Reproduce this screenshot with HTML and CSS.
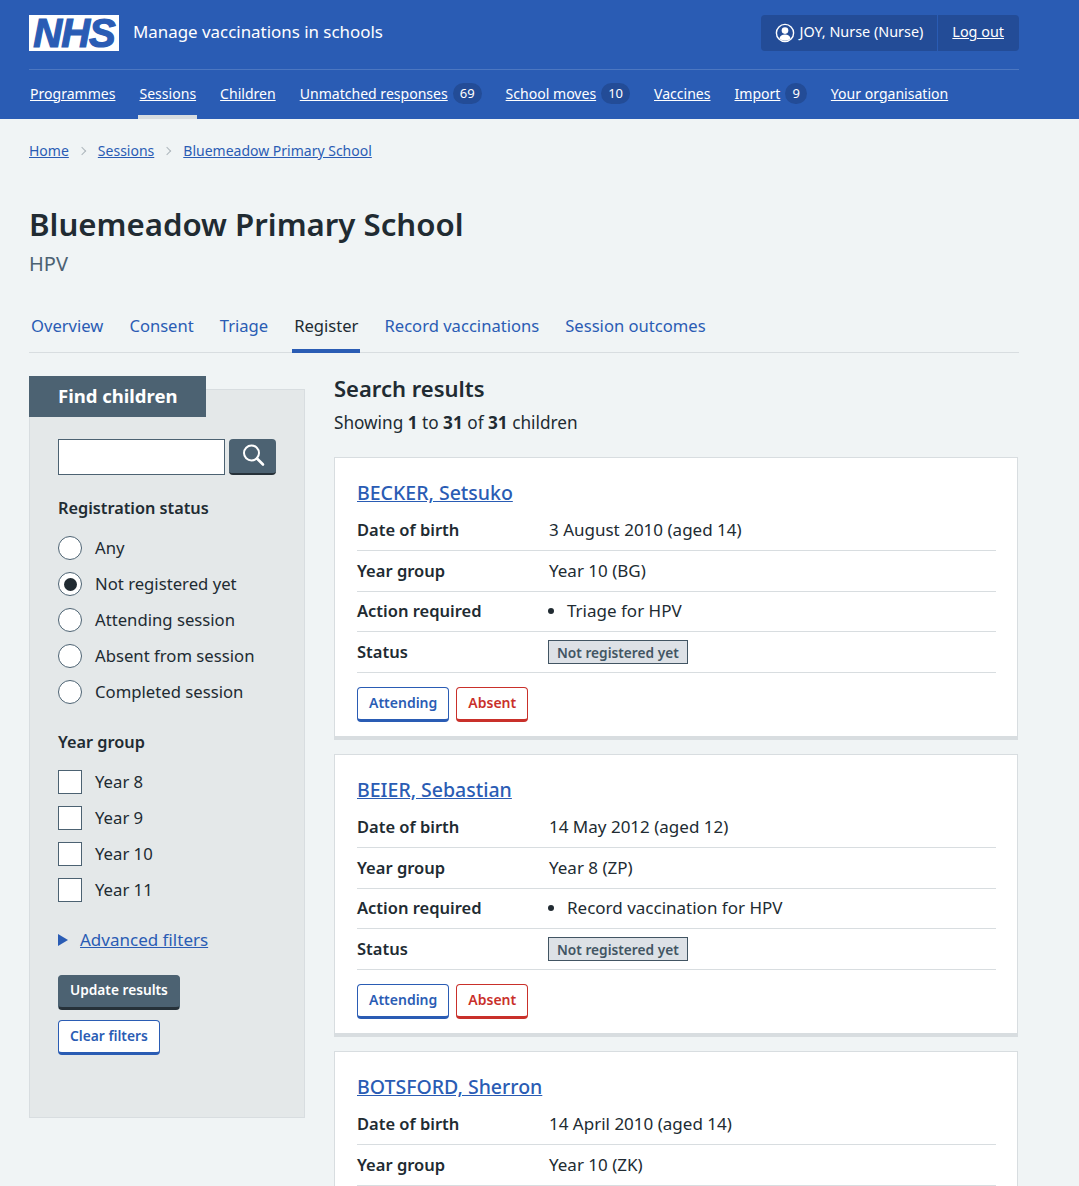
FILE: index.html
```html
<!DOCTYPE html>
<html lang="en">
<head>
    <meta charset="UTF-8">
    <meta name="viewport" content="width=device-width, initial-scale=1.0">
    <title>Bluemeadow Primary School - Register</title>
    <link rel="stylesheet" href="styles.css">
</head>
<body>
    <header class="site-header">
        <div class="header-top">
            <a class="logo" href="#">NHS</a>
            <span class="service-name">Manage vaccinations in schools</span>
            <div class="account">
                <span class="account-user">
                    <svg class="account-icon" viewBox="0 0 20 20" width="20" height="20" aria-hidden="true">
                        <circle cx="10" cy="10" r="8.6" fill="none" stroke="#fff" stroke-width="1.4"/>
                        <circle cx="10" cy="7.6" r="3.3" fill="#fff"/>
                        <path d="M4.4 15.6c.5-2.9 2.7-4 5.6-4s5.100 1.100 5.600 4a8.200 8.200 0 0 1-11.200 0z" fill="#fff"/>
                    </svg>
                    JOY, Nurse (Nurse)
                </span>
                <a class="account-link" href="#">Log out</a>
            </div>
        </div>
        <nav class="header-nav">
            <a class="nav-link" href="#"><u>Programmes</u></a>
            <a class="nav-link nav-link-active" href="#"><u>Sessions</u></a>
            <a class="nav-link" href="#"><u>Children</u></a>
            <a class="nav-link" href="#"><u>Unmatched responses</u><span class="count">69</span></a>
            <a class="nav-link" href="#"><u>School moves</u><span class="count">10</span></a>
            <a class="nav-link" href="#"><u>Vaccines</u></a>
            <a class="nav-link" href="#"><u>Import</u><span class="count">9</span></a>
            <a class="nav-link" href="#"><u>Your organisation</u></a>
        </nav>
    </header>

    <div class="page">
        <nav class="breadcrumb">
            <a href="#">Home</a>
            <span class="crumb-sep"></span>
            <a href="#">Sessions</a>
            <span class="crumb-sep"></span>
            <a href="#">Bluemeadow Primary School</a>
        </nav>

        <h1 class="page-title">Bluemeadow Primary School</h1>
        <p class="page-caption">HPV</p>

        <nav class="tabs">
            <a class="tab" href="#">Overview</a>
            <a class="tab" href="#">Consent</a>
            <a class="tab" href="#">Triage</a>
            <a class="tab tab-active" href="#">Register</a>
            <a class="tab" href="#">Record vaccinations</a>
            <a class="tab" href="#">Session outcomes</a>
        </nav>

        <div class="columns">
            <aside class="filters">
                <h2 class="filters-title">Find children</h2>
                <div class="search-row">
                    <input class="search-input" type="text" aria-label="Search">
                    <button class="search-button" type="button" aria-label="Search">
                        <svg viewBox="0 0 24 24" width="24" height="24" aria-hidden="true">
                            <circle cx="10.500" cy="10" r="7.500" fill="none" stroke="#fff" stroke-width="2"/>
                            <path d="M16 15.500l6 6" stroke="#fff" stroke-width="2.600" stroke-linecap="round"/>
                        </svg>
                    </button>
                </div>

                <h3 class="filter-label">Registration status</h3>
                <div class="option"><span class="radio"></span>Any</div>
                <div class="option"><span class="radio radio-checked"></span>Not registered yet</div>
                <div class="option"><span class="radio"></span>Attending session</div>
                <div class="option"><span class="radio"></span>Absent from session</div>
                <div class="option"><span class="radio"></span>Completed session</div>

                <h3 class="filter-label filter-label-year">Year group</h3>
                <div class="option"><span class="checkbox"></span>Year 8</div>
                <div class="option"><span class="checkbox"></span>Year 9</div>
                <div class="option"><span class="checkbox"></span>Year 10</div>
                <div class="option"><span class="checkbox"></span>Year 11</div>

                <div class="advanced"><span class="advanced-arrow"></span><a href="#">Advanced filters</a></div>

                <div class="filter-actions">
                    <button class="btn btn-dark" type="button">Update results</button>
                    <button class="btn btn-blue btn-clear" type="button">Clear filters</button>
                </div>
            </aside>

            <main class="results">
                <h2 class="results-title">Search results</h2>
                <p class="results-count">Showing <b>1</b> to <b>31</b> of <b>31</b> children</p>

                <section class="card">
                    <h3 class="card-name"><a href="#">BECKER, Setsuko</a></h3>
                    <dl class="summary">
                        <div class="row"><dt>Date of birth</dt><dd>3 August 2010 (aged 14)</dd></div>
                        <div class="row"><dt>Year group</dt><dd>Year 10 (BG)</dd></div>
                        <div class="row"><dt>Action required</dt><dd><ul class="action-list"><li>Triage for HPV</li></ul></dd></div>
                        <div class="row"><dt>Status</dt><dd><span class="tag">Not registered yet</span></dd></div>
                    </dl>
                    <div class="card-actions">
                        <button class="btn btn-blue" type="button">Attending</button>
                        <button class="btn btn-red" type="button">Absent</button>
                    </div>
                </section>

                <section class="card">
                    <h3 class="card-name"><a href="#">BEIER, Sebastian</a></h3>
                    <dl class="summary">
                        <div class="row"><dt>Date of birth</dt><dd>14 May 2012 (aged 12)</dd></div>
                        <div class="row"><dt>Year group</dt><dd>Year 8 (ZP)</dd></div>
                        <div class="row"><dt>Action required</dt><dd><ul class="action-list"><li>Record vaccination for HPV</li></ul></dd></div>
                        <div class="row"><dt>Status</dt><dd><span class="tag">Not registered yet</span></dd></div>
                    </dl>
                    <div class="card-actions">
                        <button class="btn btn-blue" type="button">Attending</button>
                        <button class="btn btn-red" type="button">Absent</button>
                    </div>
                </section>

                <section class="card">
                    <h3 class="card-name"><a href="#">BOTSFORD, Sherron</a></h3>
                    <dl class="summary">
                        <div class="row"><dt>Date of birth</dt><dd>14 April 2010 (aged 14)</dd></div>
                        <div class="row"><dt>Year group</dt><dd>Year 10 (ZK)</dd></div>
                    </dl>
                </section>
            </main>
        </div>
    </div>
</body>
</html>
```

FILE: styles.css
```css
* {
    box-sizing: border-box;
}

html, body {
    height: 1186px;
    overflow: hidden;
}

body {
    margin: 0;
    background-color: #f0f4f5;
    color: #212b32;
    font-family: "Noto Sans", Arial, sans-serif;
    font-size: 17px;
    line-height: 24px;
}

a {
    color: #2a5cb4;
}

h1, h2, h3, p, dl, dd, ul {
    margin: 0;
    padding: 0;
}

/* Header */
.site-header {
    background-color: #2a5cb4;
    color: white;
    height: 119px;
    padding: 15px 60px 0 29px;
}

.header-top {
    display: flex;
    align-items: center;
    height: 36px;
}

.logo {
    width: 90px;
    height: 36px;
    background-color: white;
    color: #2a5cb4;
    font-family: "Liberation Sans", Arial, sans-serif;
    font-size: 40px;
    font-style: italic;
    font-weight: 700;
    letter-spacing: -1px;
    line-height: 36px;
    text-align: center;
    text-decoration: none;
    -webkit-text-stroke: 1.2px #2a5cb4;
}

.service-name {
    margin-left: 14px;
    font-size: 16.900px;
    line-height: 34px;
    height: 36px;
}

.account {
    display: flex;
    margin-left: auto;
    height: 36px;
    background-color: #234c97;
    border-radius: 4px;
    font-size: 14.400px;
    line-height: 34px;
}

.account-user {
    display: flex;
    align-items: center;
    gap: 5px;
    padding: 0 14px 2px;
    border-right: 1px solid #2a5cb4;
}

.account-icon {
    margin-top: 2px;
}

.account-link {
    padding: 0 15px 0 14px;
    color: white;
}

.header-nav {
    display: flex;
    margin-top: 18px;
    border-top: 1px solid #4c77c1;
    height: 50px;
    padding-left: 1px;
    gap: 24px;
    font-size: 14.050px;
}

.nav-link {
    display: flex;
    align-items: center;
    gap: 5px;
    height: 49px;
    padding-bottom: 2px;
    color: white;
    text-decoration: none;
    position: relative;
}

.nav-link-active::after {
    content: "";
    position: absolute;
    left: -1px;
    right: -1px;
    bottom: 0;
    height: 4px;
    background-color: #d8dde0;
}

.count {
    min-width: 21px;
    height: 21px;
    padding: 0 7px;
    border-radius: 11px;
    background-color: #234c97;
    font-size: 13px;
    line-height: 21px;
    text-align: center;
}

/* Page */
.page {
    padding: 0 60px 0 29px;
}

.breadcrumb {
    display: flex;
    align-items: center;
    height: 24px;
    margin-top: 20px;
    font-size: 14px;
}

.crumb-sep {
    width: 6px;
    height: 6px;
    margin: 0 13px 0 10px;
    border-top: 1px solid #aeb7bd;
    border-right: 1px solid #aeb7bd;
    transform: rotate(45deg);
}

.page-title {
    margin-top: 39px;
    font-size: 31.200px;
    line-height: 44px;
    font-weight: 600;
}

.page-caption {
    margin-top: 4px;
    font-size: 20px;
    line-height: 28px;
    color: #4c6272;
}

.tabs {
    display: flex;
    margin-top: 25px;
    height: 50px;
    border-bottom: 1px solid #d8dde0;
    gap: 22px;
    font-size: 16.600px;
}

.tab {
    height: 50px;
    padding: 11px 2px 0;
    text-decoration: none;
}

.tab-active {
    color: #212b32;
    border-bottom: 4px solid #2a5cb4;
}

/* Columns */
.columns {
    display: flex;
    margin-top: 23px;
    align-items: flex-start;
}

.filters {
    width: 276px;
    height: 729px;
    margin-top: 13px;
    padding: 0 27px 0 28px;
    background-color: #e4e8e9;
    border: 1px solid #d8dde0;
    flex-shrink: 0;
}

.filters-title {
    width: 177px;
    height: 41px;
    margin: -14px 0 0 -29px;
    padding-left: 29px;
    background-color: #4c6272;
    color: white;
    font-size: 18.500px;
    line-height: 39px;
}

.search-row {
    display: flex;
    gap: 4px;
    margin-top: 22px;
}

.search-input {
    width: 167px;
    height: 36px;
    background-color: white;
    border: 1px solid #4c6272;
    border-radius: 0;
}

.search-button {
    display: flex;
    align-items: center;
    justify-content: center;
    width: 47px;
    height: 36px;
    padding: 0 0 3px;
    background-color: #4c6272;
    border: none;
    border-bottom: 2px solid #263139;
    border-radius: 4px;
}

.filter-label {
    margin-top: 21px;
    font-size: 16.300px;
    line-height: 24px;
    font-weight: 600;
}

.filter-label-year {
    margin-top: 20px;
}

.option {
    display: flex;
    align-items: center;
    height: 36px;
    margin-top: 0;
    font-size: 16.700px;
}

.filter-label + .option {
    margin-top: 10px;
}

.radio, .checkbox {
    flex-shrink: 0;
    width: 24px;
    height: 24px;
    margin-right: 13px;
    background-color: white;
    border: 1.500px solid #4c6272;
}

.radio {
    border-radius: 50%;
    display: flex;
    align-items: center;
    justify-content: center;
}

.radio-checked::after {
    content: "";
    width: 13px;
    height: 13px;
    border-radius: 50%;
    background-color: #212b32;
}

.advanced {
    display: flex;
    align-items: center;
    margin-top: 20px;
}

.advanced-arrow {
    width: 0;
    height: 0;
    margin-right: 12px;
    border-left: 10px solid #2a5cb4;
    border-top: 6px solid transparent;
    border-bottom: 6px solid transparent;
}

.filter-actions {
    display: flex;
    flex-direction: column;
    align-items: flex-start;
    gap: 10px;
    margin-top: 23px;
}

.btn {
    height: 35px;
    padding: 0 11px 2px;
    background-color: white;
    border: 1px solid;
    border-bottom-width: 3px;
    border-radius: 4px;
    font-family: inherit;
    font-size: 14px;
    font-weight: 600;
}

.btn-dark {
    padding-bottom: 4px;
    background-color: #4c6272;
    border-color: #4c6272 #4c6272 #263139;
    color: white;
    font-size: 13.700px;
}

.btn-blue {
    border-color: #2a5cb4;
    color: #2a5cb4;
}

.btn-clear {
    font-size: 13.800px;
}

.btn-red {
    border-color: #c9302a;
    color: #c9302a;
}

/* Results */
.results {
    width: 684px;
    margin-left: 29px;
    margin-top: -2px;
}

.results-title {
    font-size: 22px;
    line-height: 28px;
    font-weight: 600;
}

.results-count {
    margin-top: 9px;
    font-size: 17.200px;
}

.card {
    height: 283px;
    margin-top: 14px;
    padding: 21.500px 21px 0 22px;
    background-color: white;
    border: 1px solid #d8dde0;
    border-bottom-width: 4px;
}

.results-count + .card {
    margin-top: 22px;
}

.card-name {
    font-size: 19.500px;
    line-height: 25px;
    font-weight: 500;
}

.summary {
    margin-top: 6px;
}

.row {
    display: flex;
    align-items: center;
    height: 40.500px;
    border-bottom: 1px solid #d8dde0;
}

.row dt {
    width: 192px;
    font-size: 16.500px;
    font-weight: 600;
}

.action-list {
    padding-left: 18px;
}

.tag {
    display: inline-block;
    height: 24px;
    margin-left: -1px;
    padding: 0 8px;
    background-color: #dde1e6;
    border: 1px solid #425563;
    color: #425563;
    font-size: 13.700px;
    font-weight: 600;
    line-height: 23px;
    vertical-align: middle;
}

.card-actions {
    display: flex;
    gap: 7px;
    margin-top: 14.500px;
}
```
